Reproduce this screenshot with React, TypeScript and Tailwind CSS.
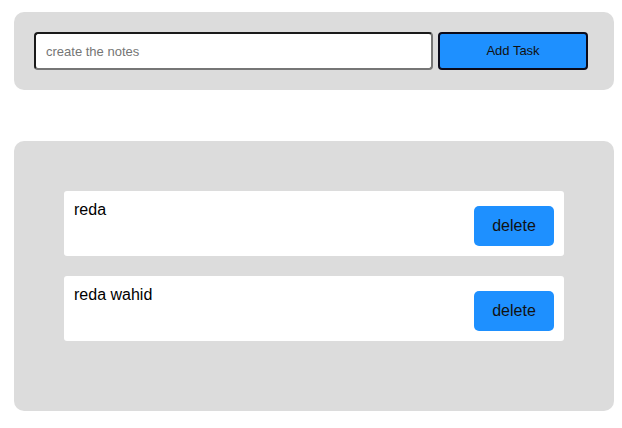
import React from "react";

export default function App() {
  const items = ["reda", "reda wahid"];
  return (
    <div className="min-h-[428px] bg-white pt-[12px] pl-[14px]" style={{ fontFamily: "Arial, 'Liberation Sans', sans-serif" }}>
      <div className="w-[600px] h-[78px] rounded-[10px] bg-[#dcdcdc] px-[20px] py-[20px] flex gap-[5px]">
        <input
          placeholder="create the notes"
          className="w-[399px] h-[38px] rounded-[4px] border-2 border-t-[#1a1a1a] border-l-[#1a1a1a] border-b-[#767676] border-r-[#767676] bg-white px-[10px] text-[13px] text-black placeholder:text-[#757575] outline-none"
        />
        <button className="w-[150px] h-[38px] rounded-[4px] border-2 border-[#0a0a1a] bg-[#1e90ff] text-[13px] text-[#111]">
          Add Task
        </button>
      </div>
      <div className="mt-[51px] w-[600px] h-[270px] rounded-[10px] bg-[#dcdcdc] px-[50px] pt-[50px]">
        {items.map((t) => (
          <div key={t} className="mb-[20px] h-[65px] rounded-[3px] bg-white px-[10px] pt-[10px] flex justify-between items-start">
            <span className="text-[16px] leading-[18px] text-black">{t}</span>
            <button className="mt-[5px] w-[80px] h-[40px] rounded-[5px] bg-[#1e90ff] text-[16px] text-[#111]">
              delete
            </button>
          </div>
        ))}
      </div>
    </div>
  );
}
